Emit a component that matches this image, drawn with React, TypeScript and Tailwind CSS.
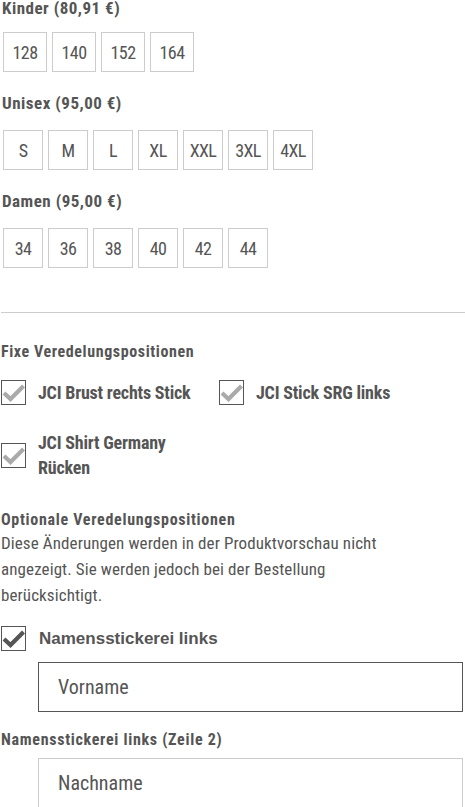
import React from "react";

const narrow = "font-['Roboto_Condensed','DejaVu_Sans_Condensed',sans-serif]";

const groups = [
  { title: "Kinder (80,91 €)", box: "w-[44px]", sizes: ["128", "140", "152", "164"] },
  { title: "Unisex (95,00 €)", box: "w-[40px]", sizes: ["S", "M", "L", "XL", "XXL", "3XL", "4XL"] },
  { title: "Damen (95,00 €)", box: "w-[40px]", sizes: ["34", "36", "38", "40", "42", "44"] },
];

const Check = ({ dark }: { dark?: boolean }) => (
  <div className="w-[25px] h-[25px] shrink-0 border border-[#555] bg-white relative">
    <svg viewBox="0 0 25 25" className="absolute left-[-1px] top-[-1px] w-[25px] h-[25px]">
      <path
        d="M3 13 L9.5 19 L22.5 6"
        fill="none"
        stroke={dark ? "#555555" : "#aaaaaa"}
        strokeWidth="4.2"
        strokeLinejoin="miter"
      />
    </svg>
  </div>
);

export default function App() {
  return (
    <div className={`w-[465px] bg-white text-[#555] ${narrow} overflow-hidden`}>
      {/* size groups */}
      {groups.map((g, i) => (
        <div key={g.title} className={i === 0 ? "-mt-[2px]" : "mt-[21px]"}>
          <h3 className="text-[17px] leading-[20px] font-bold tracking-[0.5px] pl-[2px]">
            {g.title}
          </h3>
          <div className={`flex gap-[5px] pl-[3px] ${i === 0 ? "mt-[14px]" : "mt-[17px]"}`}>
            {g.sizes.map((s) => (
              <div
                key={s}
                className={`${g.box} h-[40px] border border-[#ccc] flex items-center justify-center text-[18px] tracking-[-0.6px]`}
              >
                {s}
              </div>
            ))}
          </div>
        </div>
      ))}

      <div className="mt-[44px] ml-[1px] border-t border-[#ccc]" />

      {/* fixed positions */}
      <h3 className="mt-[29px] text-[16px] leading-[20px] font-bold tracking-[0.6px] pl-[1px]">
        Fixe Veredelungspositionen
      </h3>
      <div className="mt-[18px] flex flex-wrap gap-y-[25px] pl-[1px]">
        <div className="w-[218px] flex items-center gap-[12px]">
          <Check />
          <span className="text-[18px] leading-[25px] font-bold tracking-[-0.2px]">
            JCI Brust rechts Stick
          </span>
        </div>
        <div className="w-[218px] flex items-center gap-[12px]">
          <Check />
          <span className="text-[18px] leading-[25px] font-bold tracking-[-0.2px]">
            JCI Stick SRG links
          </span>
        </div>
        <div className="w-[218px] flex items-center gap-[12px]">
          <Check />
          <span className="w-[150px] text-[18px] leading-[25px] font-bold tracking-[-0.2px]">
            JCI Shirt Germany Rücken
          </span>
        </div>
      </div>

      {/* optional positions */}
      <h3 className="mt-[30px] text-[16px] leading-[20px] font-bold tracking-[0.7px] pl-[1px]">
        Optionale Veredelungspositionen
      </h3>
      <p className="w-[400px] text-[17px] leading-[26px] tracking-[0.1px] pl-[1px]">
        Diese Änderungen werden in der Produktvorschau nicht angezeigt. Sie werden jedoch bei
        der Bestellung berücksichtigt.
      </p>

      <div className="mt-[18px] flex items-center gap-[13px] pl-[1px]">
        <Check dark />
        <span className="font-['Liberation_Sans',Arial,sans-serif] text-[17px] font-bold leading-[25px]">
          Namensstickerei links
        </span>
      </div>
      <div className="mt-[11px] ml-[38px] w-[425px] h-[50px] border border-[#555] flex items-center pl-[19px] text-[20px]">
        Vorname
      </div>

      <h3 className="mt-[18px] text-[16px] leading-[20px] font-bold tracking-[0.7px] pl-[1px]">
        Namensstickerei links (Zeile 2)
      </h3>
      <div className="mt-[8px] ml-[38px] w-[425px] h-[50px] border border-[#ccc] flex items-center pl-[19px] text-[20px]">
        Nachname
      </div>
    </div>
  );
}
